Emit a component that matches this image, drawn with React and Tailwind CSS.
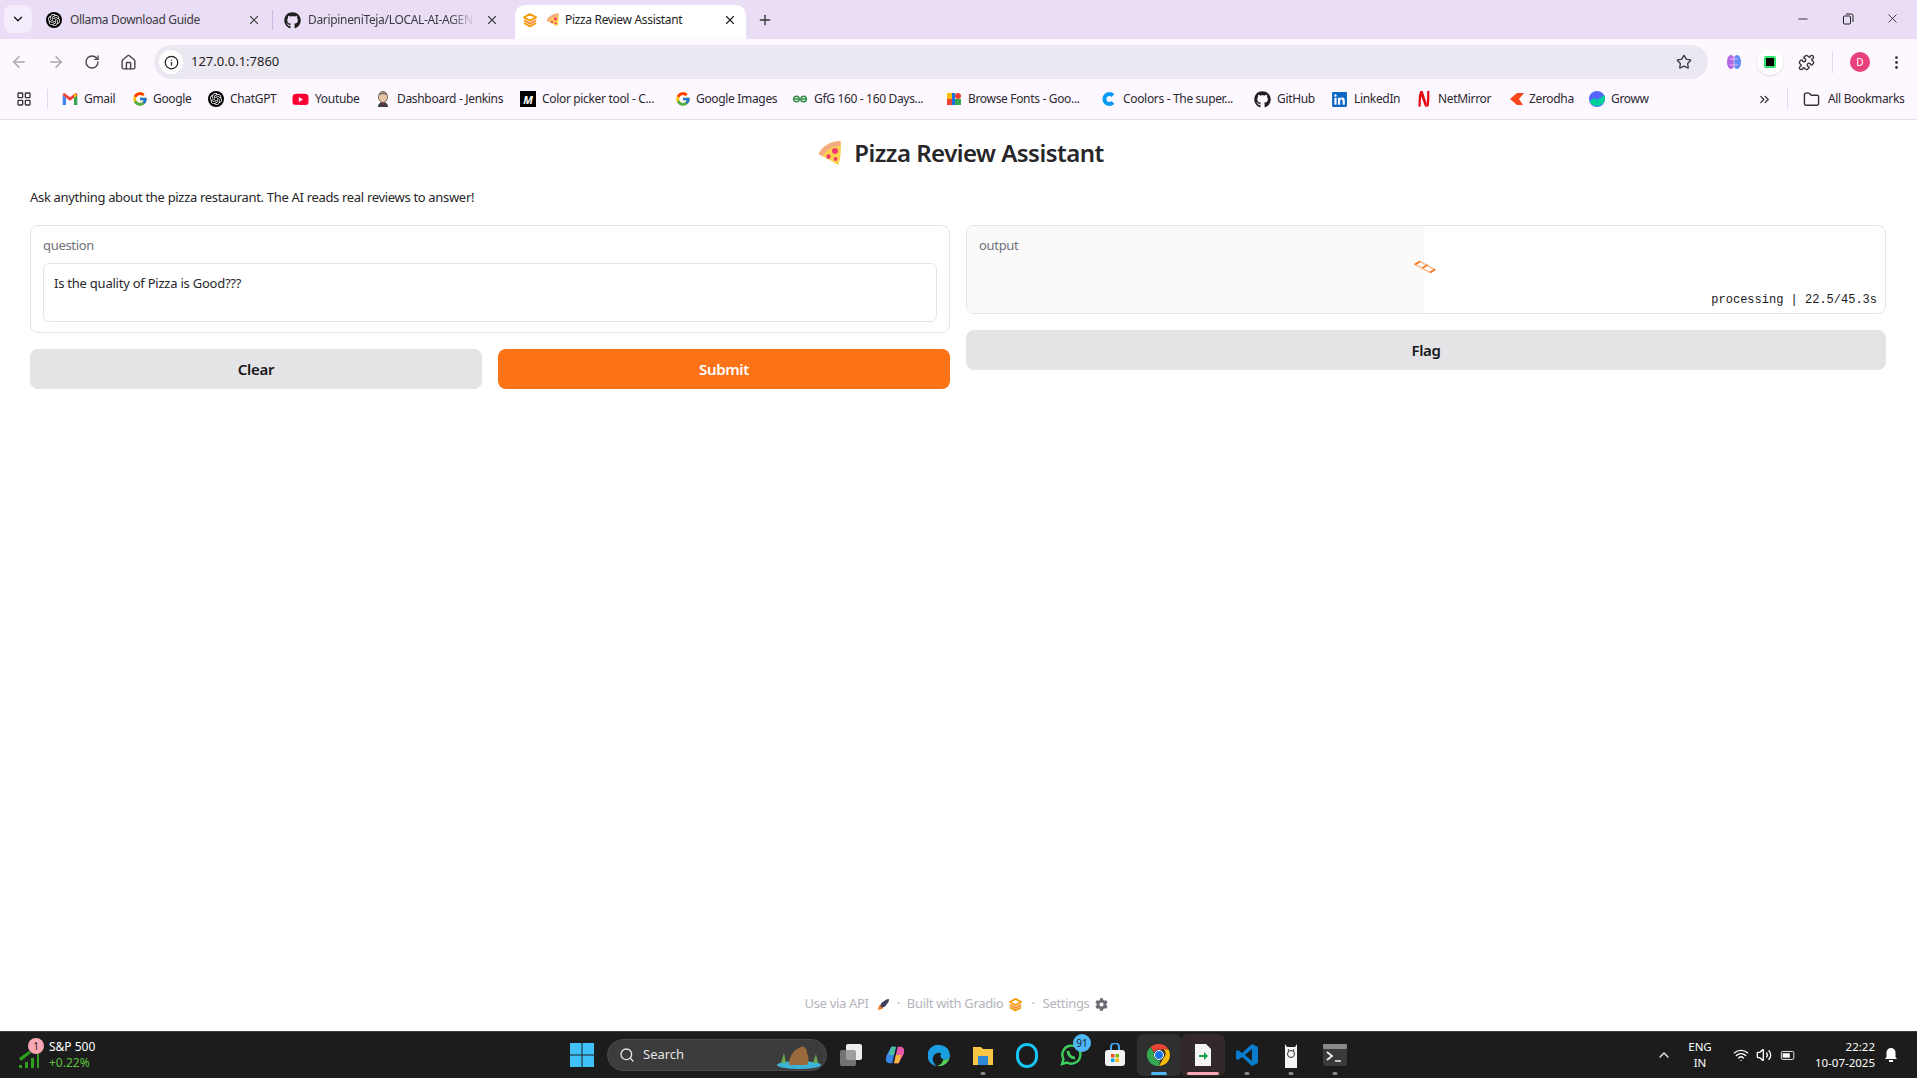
import { ArrowLeft, ArrowRight, RotateCw, Home, Info, Star, Puzzle, MoreVertical, X, Plus, ChevronDown, ChevronUp, Minus, Folder, ChevronsRight, Search, Wifi, Volume2, LayoutGrid } from 'lucide-react';
import { FcGoogle } from 'react-icons/fc';
import { FaGithub, FaLinkedin, FaYoutube, FaCog } from 'react-icons/fa';
import { SiOpenai } from 'react-icons/si';

const CHROME_FONT = "font-['Noto_Sans','Open_Sans',sans-serif]";
const PAGE_FONT = "font-['Noto_Sans','Open_Sans',sans-serif]";

function OpenAiDot({ size = 16 }) {
  return (
    <span className="flex items-center justify-center rounded-full bg-black shrink-0" style={{ width: size, height: size }}>
      <SiOpenai size={size - 4} color="#fff" />
    </span>
  );
}

function PizzaSlice({ className }) {
  return (
    <svg viewBox="0 0 24 26" className={className}>
      <path d="M23 1 C14 1 5 6 1 14 L21 25 C23 18 24 9 23 1Z" fill="#fcd34d" />
      <path d="M23 1 C14 1 5 6 1 14 L5 16.500 C9 10 15 6 23 6Z" fill="#f4ac80" />
      <circle cx="17.500" cy="11" r="3" fill="#ef3b6d" />
      <circle cx="11" cy="16.500" r="2.200" fill="#ef3b6d" />
      <circle cx="18" cy="19" r="2" fill="#ef3b6d" />
    </svg>
  );
}

function GradioLogo({ className }) {
  return (
    <svg viewBox="0 0 24 24" className={className} fill="none" stroke="#f59e0b" strokeWidth="3" strokeLinejoin="round">
      <path d="M12 3 L21 8 L12 13 L3 8Z" />
      <path d="M3 12.500 L12 17.500 L21 12.500" stroke="#fb923c" />
      <path d="M3 16.500 L12 21.500 L21 16.500" stroke="#f59e0b" />
    </svg>
  );
}

function GmailIcon() {
  return (
    <svg viewBox="0 0 24 18" className="w-4 h-3 shrink-0">
      <path d="M1 18V3l5 4v11H1z" fill="#4285f4" />
      <path d="M23 18V3l-5 4v11h5z" fill="#34a853" />
      <path d="M1 3c0-3 3-3 4-2l7 5.500L19 1c1-1 4-1 4 2l-5 4-6 4.500L6 7z" fill="#ea4335" />
      <path d="M18 1l5 2-5 4z" fill="#fbbc04" />
    </svg>
  );
}

function JenkinsIcon() {
  return (
    <svg viewBox="0 0 16 18" className="w-4 h-[18px] shrink-0">
      <path d="M3 17c0-3 2-5 5-5s5 2 5 5z" fill="#3f3f46" />
      <ellipse cx="8" cy="7" rx="4.500" ry="5.500" fill="#e8c6a8" stroke="#5b4636" strokeWidth="0.8" />
      <path d="M4 5c1-3 7-4 8 0-3-1-5-1-8 0z" fill="#77706a" />
      <path d="M6 13l2 2 2-2-2 1z" fill="#c62828" />
    </svg>
  );
}

function ColorPickerIcon() {
  return (
    <span className="flex items-center justify-center w-4 h-4 bg-black shrink-0 text-white text-[11px] font-bold italic leading-none">M</span>
  );
}

function GfgIcon() {
  return (
    <svg viewBox="0 0 20 12" className="w-4 h-3 shrink-0" fill="none" stroke="#2f8d46" strokeWidth="1.800">
      <circle cx="5.500" cy="6" r="3.500" />
      <circle cx="14.500" cy="6" r="3.500" />
      <path d="M2 6h7M11 6h7" />
    </svg>
  );
}

function FontsIcon() {
  return (
    <svg viewBox="0 0 16 16" className="w-4 h-4 shrink-0">
      <rect x="1" y="2" width="5" height="6" fill="#fbbc04" />
      <rect x="1" y="8" width="5" height="6" fill="#ea4335" />
      <rect x="6" y="2" width="3" height="12" fill="#1a73e8" />
      <circle cx="12" cy="5" r="3" fill="#ea4335" />
      <rect x="9" y="8" width="6" height="6" fill="#34a853" />
    </svg>
  );
}

function CoolorsIcon() {
  return (
    <svg viewBox="0 0 16 16" className="w-4 h-4 shrink-0">
      <path d="M12 4.500A5 5 0 1 0 12 11.500" fill="none" stroke="#0a9cf5" strokeWidth="4" />
    </svg>
  );
}

function NetflixIcon() {
  return (
    <svg viewBox="0 0 16 20" className="w-4 h-[18px] shrink-0">
      <path d="M2 19C2 10 2 5 4 1h2.500L11 15l-.5 4-1.500-1L5 7c-.6 4-.6 8-.6 11z" fill="#e50914" />
      <path d="M14 1c0 8 0 14-1 17l-2.500 1c1-6 1-12 1-18z" fill="#e50914" />
    </svg>
  );
}

function ZerodhaIcon() {
  return (
    <svg viewBox="0 0 16 16" className="w-4 h-4 shrink-0 -mr-[2px]">
      <path d="M8 2h7L10 8l4 6H8L1 8z" fill="#f6461a" />
    </svg>
  );
}

function GrowwIcon() {
  return (
    <svg viewBox="0 0 16 16" className="w-4 h-4 shrink-0">
      <circle cx="8" cy="8" r="8" fill="#5367ff" />
      <path d="M0.500 10L5 7l3 2 7.500-5A8 8 0 0 1 0.500 10z" fill="#00d09c" />
    </svg>
  );
}

const bookmarks = [
  { label: 'Gmail', icon: <GmailIcon />, w: 'w-[71px]' },
  { label: 'Google', icon: <FcGoogle size={16} className="shrink-0 -ml-[1px] -mr-[1px]" />, w: 'w-[75px]' },
  { label: 'ChatGPT', icon: <OpenAiDot />, w: 'w-[84px]' },
  { label: 'Youtube', icon: <FaYoutube size={17} color="#ff0033" className="shrink-0" />, w: 'w-[83px]' },
  { label: 'Dashboard - Jenkins', icon: <JenkinsIcon />, w: 'w-[145px]' },
  { label: 'Color picker tool - C...', icon: <ColorPickerIcon />, w: 'w-[156px]' },
  { label: 'Google Images', icon: <FcGoogle size={16} className="shrink-0 -ml-[1px] -mr-[1px]" />, w: 'w-[116px]' },
  { label: 'GfG 160 - 160 Days...', icon: <GfgIcon />, w: 'w-[154px]' },
  { label: 'Browse Fonts - Goo...', icon: <FontsIcon />, w: 'w-[155px]' },
  { label: 'Coolors - The super...', icon: <CoolorsIcon />, w: 'w-[153px]' },
  { label: 'GitHub', icon: <FaGithub size={17} color="#1f1f1f" className="shrink-0" />, w: 'w-[77px]' },
  { label: 'LinkedIn', icon: <FaLinkedin size={17} color="#0a66c2" className="shrink-0" />, w: 'w-[85px]' },
  { label: 'NetMirror', icon: <NetflixIcon />, w: 'w-[93px]' },
  { label: 'Zerodha', icon: <ZerodhaIcon />, w: 'w-[80px]' },
  { label: 'Groww', icon: <GrowwIcon />, w: 'w-[62px]' },
];

function TabStrip() {
  return (
    <div className={`h-[39px] bg-[#e9def5] flex items-end text-[12px] tracking-[-0.33px] text-[#1f1f1f] ${CHROME_FONT}`}>
      <div className="w-[28px] h-[28px] ml-1 mb-[6px] rounded-lg bg-[#f5edfb] flex items-center justify-center">
        <ChevronDown size={14} strokeWidth={2.5} />
      </div>
      <div className="w-[240px] h-[34px] pb-[4px] pl-[14px] pr-[11px] flex items-center">
        <OpenAiDot />
        <span className="ml-[8px] flex-1 text-[#3c3a40]">Ollama Download Guide</span>
        <X size={14} color="#444" />
      </div>
      <div className="w-px h-[20px] mb-[9px] bg-[#c9b8e0]" />
      <div className="w-[242px] h-[34px] pb-[4px] pl-[11px] pr-[16px] flex items-center">
        <FaGithub size={17} color="#1f1f1f" className="shrink-0" />
        <span className="ml-[7px] w-[167px] overflow-hidden whitespace-nowrap text-[#3c3a40] [mask-image:linear-gradient(to_right,black_85%,transparent)]">DaripineniTeja/LOCAL-AI-AGENT</span>
        <X size={14} color="#444" className="ml-auto" />
      </div>
      <div className="w-[231px] h-[34px] pb-[4px] pl-[7px] pr-[9px] bg-white rounded-t-[10px] flex items-center">
        <GradioLogo className="w-4 h-4 shrink-0" />
        <PizzaSlice className="w-[13px] h-[14px] ml-[8px] shrink-0" />
        <span className="ml-[6px] flex-1">Pizza Review Assistant</span>
        <X size={14} color="#222" />
      </div>
      <div className="w-[38px] h-[34px] pb-[4px] flex items-center justify-center">
        <Plus size={16} color="#333" />
      </div>
      <div className="ml-auto h-[39px] pb-[2px] flex items-center text-[#1f1f1f]">
        <div className="w-[45px] flex justify-center"><Minus size={14} strokeWidth={1.5} /></div>
        <div className="w-[45px] flex justify-center">
          <svg viewBox="0 0 12 12" className="w-3 h-3" fill="none" stroke="#1f1f1f"><rect x="1.500" y="3" width="7" height="8" rx="1" /><path d="M4 1h5.500a1.500 1.500 0 0 1 1.500 1.500V9" /></svg>
        </div>
        <div className="w-[47px] pr-[2px] flex justify-center"><X size={15} strokeWidth={1.3} /></div>
      </div>
    </div>
  );
}

function Toolbar() {
  return (
    <div className={`h-[40px] bg-[#fdf7ff] flex items-start pt-[6px] ${CHROME_FONT}`}>
      <div className="w-[154px] h-[34px] pl-[1px] flex items-center">
        <span className="w-[36.500px] flex justify-center"><ArrowLeft size={18} color="#a9a6ad" /></span>
        <span className="w-[36.500px] flex justify-center"><ArrowRight size={18} color="#a9a6ad" /></span>
        <span className="w-[36.500px] flex justify-center"><RotateCw size={16} color="#48464a" /></span>
        <span className="w-[36.500px] flex justify-center"><Home size={17} color="#48464a" /></span>
      </div>
      <div className="w-[1554px] h-[34px] rounded-full bg-[#ece8f1] flex items-center pl-[5px] pr-[16px]">
        <span className="w-[24px] h-[24px] rounded-full bg-white flex items-center justify-center">
          <Info size={15} color="#1f1f1f" />
        </span>
        <span className="ml-[8px] text-[13px] text-[#1f1f1f]">127.0.0.1:7860</span>
        <Star size={16} color="#3c3a40" className="ml-auto" />
      </div>
      <div className="flex-1 h-[34px] flex items-center pl-[18px]">
        <svg viewBox="0 0 16 18" className="w-4 h-[18px] shrink-0">
          <ellipse cx="5" cy="9" rx="4" ry="7" fill="#b267e6" />
          <ellipse cx="11" cy="9" rx="4" ry="7" fill="#5f8df5" />
          <path d="M4 6h8M4 12h8M8 3v12" stroke="#f0b8e8" strokeWidth="1" />
        </svg>
        <span className="ml-[15px] w-[26px] h-[26px] rounded-full bg-white shadow-sm flex items-center justify-center">
          <span className="w-[12px] h-[12px] bg-black border-2 border-[#2ee56b] rounded-[2px]" />
        </span>
        <Puzzle size={17} color="#3c3a40" className="ml-[15px]" />
        <span className="ml-[17px] w-px h-[22px] bg-[#e3d8ee]" />
        <span className="ml-[17px] w-[20px] h-[20px] rounded-full bg-[#e8417c] text-white text-[10px] flex items-center justify-center">D</span>
        <MoreVertical size={17} color="#333" className="ml-[18px]" />
      </div>
    </div>
  );
}

function BookmarksBar() {
  return (
    <div className={`h-[41px] bg-[#fdf7ff] border-b border-[#e3e0e6] flex items-center text-[12px] tracking-[-0.33px] text-[#2b2930] ${CHROME_FONT}`}>
      <div className="w-[47px] pl-[16px]"><LayoutGrid size={16} color="#333" /></div>
      <span className="w-px h-[20px] bg-[#e3d8ee]" />
      <div className="flex items-center pl-[14px]">
        {bookmarks.map(b => (
          <div key={b.label} className={`flex items-center gap-[6px] whitespace-nowrap ${b.w}`}>
            {b.icon}
            <span>{b.label}</span>
          </div>
        ))}
      </div>
      <ChevronsRight size={15} color="#333" className="ml-[106px]" />
      <span className="ml-[15px] w-px h-[20px] bg-[#e3d8ee]" />
      <Folder size={17} color="#333" className="ml-[15px]" />
      <span className="ml-[8px] whitespace-nowrap">All Bookmarks</span>
    </div>
  );
}

function GrayButton({ children, className = '' }) {
  return (
    <div className={`h-[40px] rounded-lg bg-[#e4e4e7] flex items-center justify-center text-[15px] font-semibold text-[#18181b] ${className}`}>
      {children}
    </div>
  );
}

function GradioPage() {
  return (
    <div className={`flex-1 min-h-0 bg-white flex flex-col pl-[30px] pr-[31px] ${PAGE_FONT} tracking-[-0.02em]`}>
      <div className="h-[66px] pl-[5px] flex items-center justify-center gap-[12px] text-[#27272a]">
        <PizzaSlice className="w-[25px] h-[26px]" />
        <h1 className="text-[24px] font-semibold leading-none tracking-[-0.52px]">Pizza Review Assistant</h1>
      </div>
      <p className="h-[39px] text-[13px] leading-[22px] text-[#27272a]">Ask anything about the pizza restaurant. The AI reads real reviews to answer!</p>
      <div className="grid grid-cols-2 gap-4 items-start">
        <div className="flex flex-col gap-4">
          <div className="h-[108px] border border-[#e4e4e7] rounded-lg bg-white px-3 pt-[9px]">
            <div className="text-[13px] leading-[20px] text-[#71717a]">question</div>
            <div className="mt-[8px] h-[59px] border border-[#e4e4e7] rounded-md px-[10px] pt-[9px] text-[13px] leading-[20px] tracking-[-0.018em] text-[#27272a]">Is the quality of Pizza is Good???</div>
          </div>
          <div className="grid grid-cols-2 gap-4">
            <GrayButton>Clear</GrayButton>
            <div className="h-[40px] rounded-lg bg-[#fb7316] flex items-center justify-center text-[15px] font-semibold text-white">Submit</div>
          </div>
        </div>
        <div className="flex flex-col gap-4">
          <div className="relative h-[89px] border border-[#e4e4e7] rounded-lg bg-white px-3 pt-[9px] overflow-hidden">
            <div className="absolute left-0 top-0 bottom-0 w-[49.800%] bg-[#fafafa]" />
            <div className="relative text-[13px] leading-[20px] text-[#71717a]">output</div>
            <svg viewBox="0 0 22 14" className="absolute left-[447px] top-[34px] w-[22px] h-[14px]" fill="none" stroke="#f97316" strokeWidth="1.500">
              <path d="M1 4.500L6 1.500L21 9.500L16 12.500Z" stroke="#fdba8c" />
              <path d="M1 4.500L6 1.500M8.500 8L13.500 5M16 12.500L21 9.500" />
            </svg>
            <div className="absolute right-[8px] bottom-[5px] font-['Liberation_Mono',monospace] text-[12px] leading-[16px] tracking-normal text-[#18181b]">processing | 22.5/45.3s</div>
          </div>
          <GrayButton>Flag</GrayButton>
        </div>
      </div>
      <div className="mt-auto h-[54px] pr-[3px] flex items-center justify-center text-[13px] text-[#b4b4bb]">
        <span>Use via API</span>
        <svg viewBox="0 0 14 14" className="w-[13px] h-[13px] ml-[8px]">
          <path d="M3 9l2-4 5-3.500 3-.5-.5 3L9 9l-4 2z" fill="#3f3f55" />
          <path d="M1 13l1.500-5.500 4 4z" fill="#f97316" />
        </svg>
        <span className="mx-[7px]">·</span>
        <span>Built with Gradio</span>
        <GradioLogo className="w-[15px] h-[15px] ml-[5px]" />
        <span className="mx-[8px]">·</span>
        <span>Settings</span>
        <FaCog size={13} color="#6b6b73" className="ml-[6px]" />
      </div>
    </div>
  );
}

function AppSlot({ children, active, mark, pill }) {
  return (
    <div className={`relative w-[44px] h-[42px] flex items-center justify-center rounded-md ${active ? 'bg-[#2f2f2f]' : ''} ${mark === 'pink' ? 'bg-[#33282a]' : ''}`}>
      {children}
      {pill && <span className={`absolute bottom-[1px] left-1/2 -translate-x-1/2 h-[3px] rounded-full ${pill}`} />}
      {mark === 'dot' && <span className="absolute bottom-[1px] left-1/2 -translate-x-1/2 w-[5px] h-[3px] rounded-full bg-[#8a8a8a]" />}
    </div>
  );
}

function Taskbar() {
  return (
    <div className={`h-[47px] bg-[#1c1c1c] border-t border-[#3a3a3a] flex items-center text-white ${CHROME_FONT}`}>
      <div className="relative w-[570px] h-full pl-[18px] flex items-center">
        <svg viewBox="0 0 22 24" className="w-[22px] h-[24px] mt-[6px]">
          <path d="M1 22h3v-3H1zM7 22h3v-6H7zM13 22h3v-10h-3zM19 22h2V8h-2z" fill="#2f9e1f" />
          <path d="M1 12L11 5l2 2L3 15z" fill="#2f9e1f" />
        </svg>
        <span className="absolute left-[28px] top-[6px] w-[16px] h-[16px] rounded-full bg-[#f9a8b4] text-[#1c1c1c] text-[10px] flex items-center justify-center">1</span>
        <div className="ml-[9px] leading-[16px] text-[12px]">
          <div>S&amp;P 500</div>
          <div className="text-[#5fc33f]">+0.22%</div>
        </div>
      </div>
      <svg viewBox="0 0 24 24" className="w-[24px] h-[24px] shrink-0">
        <path d="M0 0h11.500v11.500H0zM12.500 0H24v11.500H12.500zM0 12.500h11.500V24H0zM12.500 12.500H24V24H12.500z" fill="#3fc0f7" />
      </svg>
      <div className="ml-[13px] w-[220px] h-[32px] rounded-full bg-[#3c3c3c] border border-[#4a4a4a] flex items-center pl-[11px] pr-[3px] overflow-hidden">
        <Search size={16} color="#e8e8e8" />
        <span className="ml-[8px] text-[13px] text-[#e4e4e4]">Search</span>
        <svg viewBox="0 0 48 28" className="ml-auto w-[48px] h-[28px]">
          <ellipse cx="24" cy="24" rx="22" ry="4" fill="#3bb4d8" />
          <path d="M14 24c0-10 6-16 12-18 4-1 6 2 6 6 2 4 2 8 0 12z" fill="#9a6a3c" />
          <path d="M6 22l3-10 2 10zM38 22l3-9 2 9z" fill="#6aa84f" />
        </svg>
      </div>
      <div className="ml-[2px] flex items-center">
        <AppSlot>
          <span className="relative w-[22px] h-[22px]">
            <span className="absolute right-0 top-0 w-[16px] h-[16px] rounded-[2px] bg-[#ededed]" />
            <span className="absolute left-0 bottom-0 w-[16px] h-[16px] rounded-[2px] bg-[#8a8a8a]/80" />
          </span>
        </AppSlot>
        <AppSlot>
          <svg viewBox="0 0 24 24" className="w-[22px] h-[22px]">
            <path d="M8 3h5l-4 18H6C2 21 1 17 3 12z" fill="#3a86e8" />
            <path d="M16 21h-5l4-18h3c4 0 5 4 3 9z" fill="#e85aa8" />
            <path d="M8 3h5l-2 9H5z" fill="#48c0a0" />
            <path d="M16 21h-5l2-9h6z" fill="#f6b83c" />
          </svg>
        </AppSlot>
        <AppSlot>
          <svg viewBox="0 0 24 24" className="w-[23px] h-[23px]">
            <path d="M12 1a11 11 0 0 1 11 11c0 4-4 5-7 4-3-1-4-4-2-6-3-2-9 0-9 6 0 2 1 5 4 7A11 11 0 0 1 12 1z" fill="#1b9de2" />
            <path d="M16 16c3 1 6 0 7-3-1 6-6 10-11 10-2 0-3-.5-3-.5 3 .5 6-2 7-6.500z" fill="#52d35a" />
          </svg>
        </AppSlot>
        <AppSlot mark="dot">
          <svg viewBox="0 0 24 24" className="w-[24px] h-[24px]">
            <path d="M2 4h8l2 2h10v16H2z" fill="#f6c544" />
            <rect x="7" y="13" width="10" height="9" fill="#2f88d8" />
          </svg>
        </AppSlot>
        <AppSlot>
          <span className="w-[22px] h-[25px] rounded-full border-[3px] border-[#16c4f5]" />
        </AppSlot>
        <AppSlot>
          <svg viewBox="0 0 24 24" className="w-[24px] h-[24px]" fill="none" stroke="#3ccf5e" strokeWidth="2.400">
            <path d="M3 21l1.500-5A9 9 0 1 1 8 19.500z" />
            <path d="M9 8c0 4 3 7 7 7" strokeWidth="2.800" />
          </svg>
          <span className="absolute right-[2px] top-0 w-[18px] h-[18px] rounded-full bg-[#4db8f5] text-[#12222c] text-[10px] flex items-center justify-center">91</span>
        </AppSlot>
        <AppSlot>
          <svg viewBox="0 0 22 24" className="w-[22px] h-[24px]">
            <path d="M7 7V4a4 4 0 0 1 8 0v3" fill="none" stroke="#3fa7f5" strokeWidth="2" />
            <rect x="1" y="7" width="20" height="16" rx="3" fill="#f3f3f3" />
            <path d="M7 11h3.500v3.500H7z" fill="#f25022" />
            <path d="M11.500 11H15v3.500h-3.500z" fill="#7fba00" />
            <path d="M7 15.500h3.500V19H7z" fill="#00a4ef" />
            <path d="M11.500 15.500H15V19h-3.500z" fill="#ffb900" />
          </svg>
        </AppSlot>
        <AppSlot active pill="w-[16px] bg-[#4db8f5]">
          <svg viewBox="0 0 24 24" className="w-[24px] h-[24px]">
            <path d="M12 1a11 11 0 0 1 9.500 5.500H12a5.500 5.500 0 0 0-5 3L3.500 4A11 11 0 0 1 12 1z" fill="#ea4335" />
            <path d="M21.500 6.500A11 11 0 0 1 12 23l4.700-8.200a5.500 5.500 0 0 0 0-8.300z" fill="#fbbc04" />
            <path d="M12 23A11 11 0 0 1 3.500 4L7 10a5.500 5.500 0 0 0 6 7.300z" fill="#34a853" />
            <circle cx="12" cy="12" r="4.500" fill="#1a73e8" stroke="#fff" strokeWidth="1" />
          </svg>
        </AppSlot>
        <AppSlot mark="pink" pill="w-[32px] bg-[#f9a8b4]">
          <svg viewBox="0 0 18 24" className="w-[18px] h-[24px]">
            <path d="M1 1h11l5 5v17H1z" fill="#f5f5f5" />
            <path d="M5 12h5V9l4 4-4 4v-3H5z" fill="#16a34a" />
          </svg>
        </AppSlot>
        <AppSlot mark="dot">
          <svg viewBox="0 0 24 24" className="w-[24px] h-[24px]">
            <path d="M17 1l6 3v16l-6 3L7 14l-4 3-2-1V8l2-1 4 3z" fill="#0a7ccc" />
            <path d="M17 6v12l-7-6z" fill="#1c1c1c" />
          </svg>
        </AppSlot>
        <AppSlot mark="dot">
          <svg viewBox="0 0 18 26" className="w-[18px] h-[26px]">
            <path d="M3 26V9L3 2l2 3h8l2-3v24z" fill="#f5f5f5" />
            <circle cx="9" cy="12" r="3.500" fill="none" stroke="#333" strokeWidth="1" />
            <circle cx="6.500" cy="8" r="0.800" fill="#222" />
            <circle cx="11.500" cy="8" r="0.800" fill="#222" />
          </svg>
        </AppSlot>
        <AppSlot mark="dot">
          <svg viewBox="0 0 24 24" className="w-[24px] h-[24px]">
            <rect x="0" y="1" width="24" height="22" rx="2" fill="#3a3a3a" />
            <rect x="0" y="1" width="24" height="5" rx="1" fill="#8a8a8a" />
            <path d="M4 9l5 4-5 4" fill="none" stroke="#f0f0f0" strokeWidth="1.800" />
            <path d="M12 18h6" stroke="#f0f0f0" strokeWidth="1.500" />
          </svg>
        </AppSlot>
      </div>
      <div className="ml-auto flex items-center text-[11.500px]">
        <ChevronUp size={16} color="#eee" />
        <div className="ml-[10px] w-[36px] text-center leading-[16px]">
          <div>ENG</div>
          <div>IN</div>
        </div>
        <Wifi size={16} className="ml-[15px]" />
        <Volume2 size={16} className="ml-[7px]" />
        <svg viewBox="0 0 18 14" className="ml-[8px] w-[16px] h-[14px]" fill="none" stroke="#fff">
          <rect x="1.500" y="3" width="14" height="9" rx="1.500" />
          <rect x="3" y="5" width="8" height="5" fill="#fff" stroke="none" />
        </svg>
        <div className="ml-[9px] w-[70px] text-right leading-[16px]">
          <div>22:22</div>
          <div>10-07-2025</div>
        </div>
        <svg viewBox="0 0 14 16" className="ml-[9px] mr-[19px] w-[14px] h-[16px]">
          <path d="M7 1a4.500 4.500 0 0 1 4.500 4.500V10l1.500 2H1l1.500-2V5.500A4.500 4.500 0 0 1 7 1z" fill="#fff" />
          <rect x="5" y="13" width="4" height="2" fill="#fff" />
        </svg>
      </div>
    </div>
  );
}

export default function App() {
  return (
    <div className="w-[1917px] h-[1078px] flex flex-col overflow-hidden bg-white">
      <TabStrip />
      <Toolbar />
      <BookmarksBar />
      <GradioPage />
      <Taskbar />
    </div>
  );
}
